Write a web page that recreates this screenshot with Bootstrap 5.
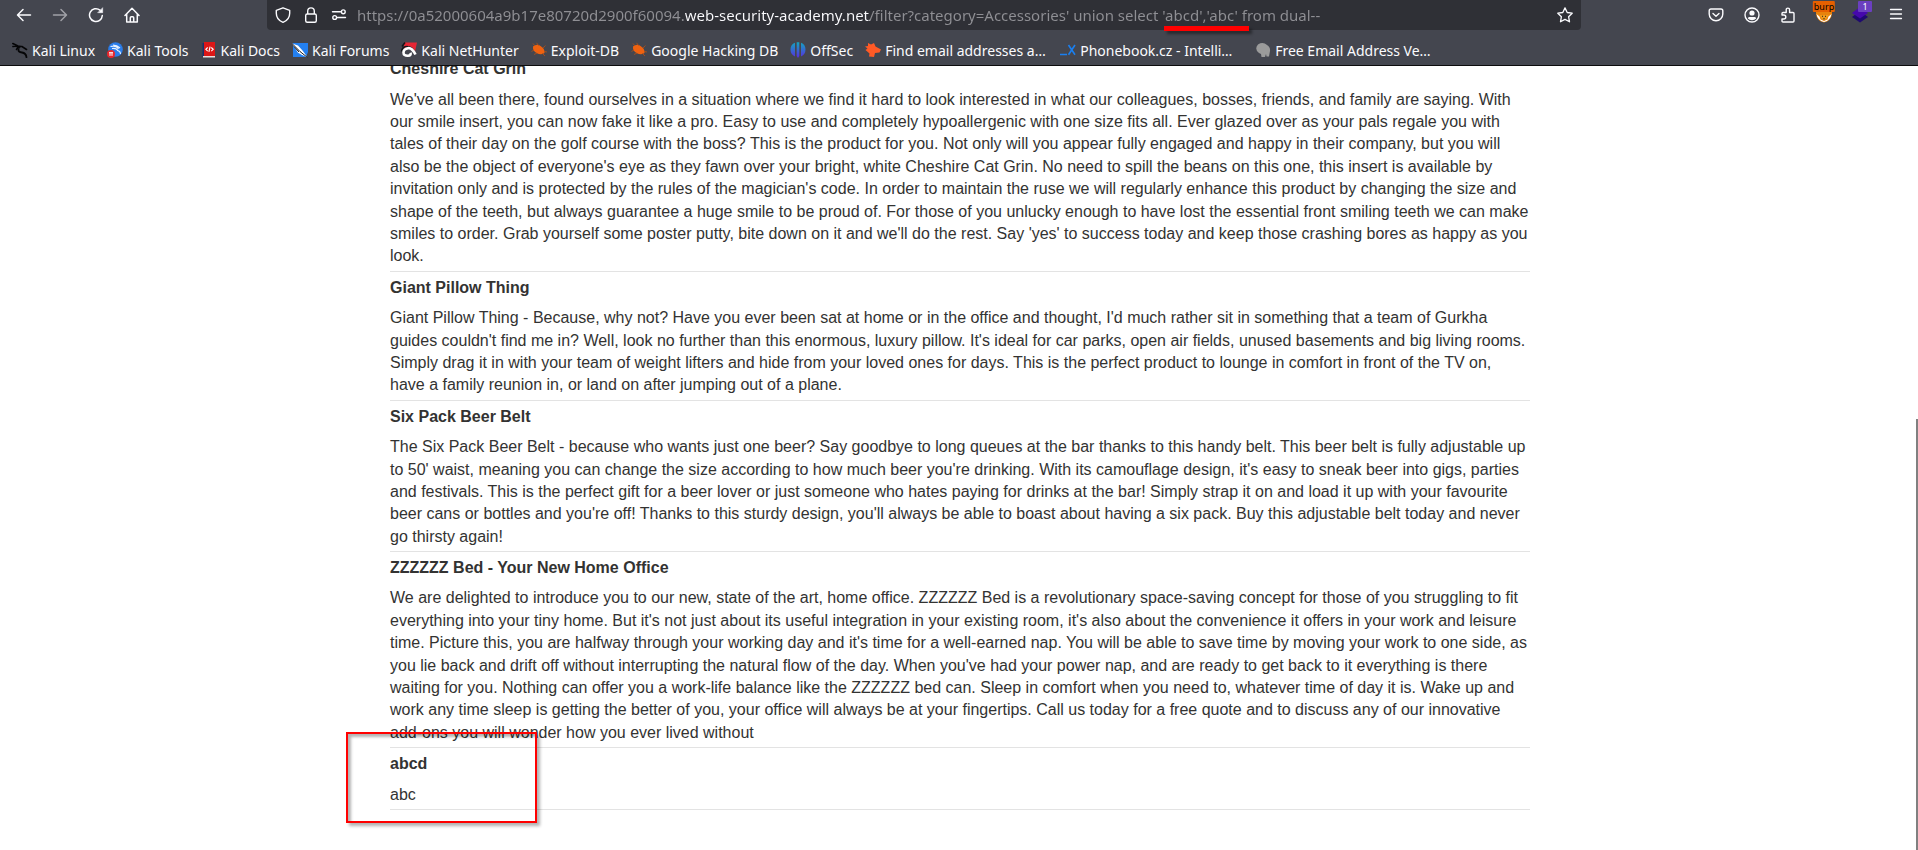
<!DOCTYPE html>
<html lang="en">
<head>
<meta charset="utf-8">
<meta name="viewport" content="width=device-width, initial-scale=1">
<title>Accessories</title>
<link href="https://cdn.jsdelivr.net/npm/bootstrap@5.3.0/dist/css/bootstrap.min.css" rel="stylesheet">
<style>
  body { font-family: "Liberation Sans", Arial, sans-serif; color: #333332; }
  .chrome { background: #44464f; border-bottom: 1px solid #0c0c0d; font-family: "Noto Sans", sans-serif; color: #fbfbfe; }
  .tool { width: 36px; height: 30px; color: #fbfbfe; }
  .tool-sm { width: 28px; height: 30px; color: #fbfbfe; }
  .toolbar-row { height: 30px; padding: 0 4px 0 6px; }
  .address { background: #2f3036; border-radius: 0 0 4px 4px; margin: 0 117px; padding: 0 2px; }
  .address input {
    height: 30px; padding: 0 4px; font-size: 15px;
    color: transparent; -webkit-text-fill-color: transparent;
    background: linear-gradient(90deg, #8f8f94 332px, #fbfbfe 332px, #fbfbfe 517px, #8f8f94 517px);
    -webkit-background-clip: text; background-clip: text;
  }
  .mark-bar { left: 897px; top: 26px; width: 85px; height: 5px; background: #f00; box-shadow: 3px 3px 3px rgba(0,0,0,.4); }
  .bookmarks { height: 35px; padding: 5px 12px 0; gap: 12px; font-size: 14px; }
  .bookmarks a { color: #fbfbfe; gap: 4px; }
  .fixed-label { width: 163px; }
  .ext-tag { top: 1px; left: 50%; height: 11px; padding: 0 1px; border-radius: 1px; font-size: 9px; line-height: 11px; }
  .ext-burp { background: #e66000; color: #000; transform: translateX(-50%); }
  .ext-count { background: #6b3fc0; color: #fff; width: 14px; margin-left: -2px; }
  .listing { max-width: 1140px; line-height: 1.4; padding-bottom: 40px; }
  .listing th, .listing td { padding: 5px 0 3px; }
  .listing td { border-bottom: 1px solid #e3e3e3; }
  .content { padding-left: 2px; }
  .mark-box { left: -44px; bottom: 27px; width: 191px; height: 91px; border: 2px solid #f00; box-shadow: 3px 3px 3px rgba(0,0,0,.3), inset 3px 3px 3px rgba(0,0,0,.3); }
  .scroll-thumb { width: 2px; top: 45%; background: #808080; }
</style>
</head>
<body class="vh-100 d-flex flex-column overflow-hidden bg-white">
<header class="chrome flex-shrink-0">
  <div class="toolbar-row d-flex">
    <button class="tool btn p-0 border-0 d-flex align-items-center justify-content-center" aria-label="Back"><svg width="16" height="16" fill="none" stroke="currentColor" stroke-width="1.5" stroke-linecap="round" stroke-linejoin="round"><path d="M14.5 8H1.8M7 2.5 1.5 8 7 13.5"/></svg></button>
    <button class="tool btn p-0 border-0 d-flex align-items-center justify-content-center opacity-50" aria-label="Forward"><svg width="16" height="16" fill="none" stroke="currentColor" stroke-width="1.5" stroke-linecap="round" stroke-linejoin="round"><path d="M1.5 8h12.700M9 2.5 14.5 8 9 13.5"/></svg></button>
    <button class="tool btn p-0 border-0 d-flex align-items-center justify-content-center" aria-label="Reload"><svg width="16" height="16" fill="none" stroke="currentColor" stroke-width="1.5" stroke-linecap="round"><path d="M14.3 8.500A6.400 6.400 0 1 1 12 3.200"/><path d="M14.700 1v4.700H10z" fill="currentColor" stroke-width=".5"/></svg></button>
    <button class="tool btn p-0 border-0 d-flex align-items-center justify-content-center" aria-label="Home"><svg width="16" height="16" fill="none" stroke="currentColor" stroke-width="1.5" stroke-linecap="round" stroke-linejoin="round"><path d="M1 8.500 8 1.300l7 7.200M2.700 7v8h10.600V7M6.300 15v-4.300q0-1 1-1h1.400q1 0 1 1V15"/></svg></button>
    <div class="address flex-fill d-flex position-relative">
      <button class="tool-sm btn p-0 border-0 d-flex align-items-center justify-content-center" aria-label="Tracking protection"><svg width="16" height="16" fill="none" stroke="currentColor" stroke-width="1.4" stroke-linejoin="round"><path d="M8 .8 14.700 3.300v2.900c0 4.400-2.600 7.500-6.700 9.100C3.900 13.700 1.300 10.600 1.300 6.200V3.300z"/></svg></button>
      <button class="tool-sm btn p-0 border-0 d-flex align-items-center justify-content-center" aria-label="Connection secure"><svg width="16" height="16" fill="none" stroke="currentColor" stroke-width="1.4"><rect x="2.700" y="7" width="10.600" height="8.200" rx="1.500"/><path d="M4.700 7V4.200a3.300 3.300 0 0 1 6.600 0V7"/></svg></button>
      <button class="tool-sm btn p-0 border-0 d-flex align-items-center justify-content-center" aria-label="Permissions"><svg width="16" height="16" fill="none" stroke="currentColor" stroke-width="1.4" stroke-linecap="round"><path d="M1.500 4.800h8M6.500 10.500h8"/><circle cx="12.300" cy="4.800" r="1.900"/><circle cx="3.700" cy="10.500" r="1.900"/></svg></button>
      <input type="text" class="flex-fill border-0 rounded-0" aria-label="Address" value="https://0a52000604a9b17e80720d2900f60094.web-security-academy.net/filter?category=Accessories' union select 'abcd','abc' from dual--">
      <button class="tool-sm btn p-0 border-0 d-flex align-items-center justify-content-center" aria-label="Bookmark this page"><svg width="16" height="16" fill="none" stroke="currentColor" stroke-width="1.3" stroke-linejoin="round"><path d="m8 .9 2.200 4.600 5 .7-3.600 3.500.9 5.100L8 12.400l-4.500 2.400.9-5.100L.8 6.200l5-.7z"/></svg></button>
      <span class="mark-bar position-absolute"></span>
    </div>
    <button class="tool btn p-0 border-0 d-flex align-items-center justify-content-center" aria-label="Pocket"><svg width="16" height="16" fill="none" stroke="currentColor" stroke-width="1.4" stroke-linecap="round" stroke-linejoin="round"><path d="M3 2h10q1.800 0 1.800 1.800V7A6.800 6.800 0 0 1 1.200 7V3.800Q1.200 2 3 2z"/><path d="M5 6.500 8 9.300l3-2.800"/></svg></button>
    <button class="tool btn p-0 border-0 d-flex align-items-center justify-content-center" aria-label="Account"><svg width="16" height="16" fill="none" stroke="currentColor" stroke-width="1.4"><circle cx="8" cy="8" r="7"/><circle cx="8" cy="6" r="2.600" fill="currentColor" stroke="none"/><path d="M3.800 11.500q0-1.500 1.500-1.500h5.400q1.500 0 1.500 1.500Q10.500 13.200 8 13.200T3.800 11.500z" fill="currentColor" stroke="none"/></svg></button>
    <button class="tool btn p-0 border-0 d-flex align-items-center justify-content-center" aria-label="Extensions"><svg width="16" height="16" fill="none" stroke="currentColor" stroke-width="1.4" stroke-linejoin="round"><path d="M2 8V6.500q0-1 1-1h3.200V2.800a1.700 1.700 0 0 1 3.400 0v2.700H13q1 0 1 1V14q0 1-1 1H3q-1 0-1-1v-2h1.800a2 2 0 0 0 0-4z"/></svg></button>
    <button class="tool btn p-0 border-0 d-flex align-items-center justify-content-center position-relative" aria-label="Proxy"><svg width="16" height="16"><path d="M0 2h16v5q-1 7-8 8.500Q1 14 0 7z" fill="#e8820c"/><path d="M.5 7q1 6.500 7.500 8 6.500-1.500 7.500-8l-3 2.500-1 3L8 14l-3.500-1.500-1-3z" fill="#fff"/><path d="M3.500 8h9l-2 3.500L8 13l-2.500-1.500z" fill="#f09a1c"/><path d="M6 9.300h1M9 9.300h1M7.300 11.800h1.400" stroke="#222"/></svg><span class="ext-tag ext-burp position-absolute">burp</span></button>
    <button class="tool btn p-0 border-0 d-flex align-items-center justify-content-center position-relative" aria-label="Technologies"><svg width="16" height="16"><path d="m8 4 8 6-8 5.500L0 10z" fill="#1f0a70"/><path d="m8 0 8 6-8 5.500L0 6z" fill="#4608ad"/></svg><span class="ext-tag ext-count position-absolute">1</span></button>
    <button class="tool btn p-0 border-0 d-flex align-items-center justify-content-center" aria-label="Menu"><svg width="16" height="16" stroke="currentColor" stroke-width="1.3" stroke-linecap="round"><path d="M2.500 2.500h11M2.500 7h11M2.500 11.500h11"/></svg></button>
  </div>
  <nav class="bookmarks d-flex align-items-center text-nowrap">
    <a href="#" class="d-flex align-items-center text-decoration-none"><svg width="16" height="16" fill="none" stroke="#050507" stroke-width="1.6" stroke-linecap="round"><path d="M.8 1.500 6 4l3 .5M1 4.500q4-1 6 1.500M4.500 7.500Q6 4 10 4.500l4.500 3"/><path d="M6.500 7.500Q6 10 10 10.500q4 .5 4.500 4.800" stroke-width="1.800"/></svg>Kali Linux</a>
    <a href="#" class="d-flex align-items-center text-decoration-none"><svg width="16" height="16"><circle cx="8.500" cy="7.500" r="7.300" fill="#2b7de9"/><path d="M3.500 4.500q6-1.500 8 2.500M5 6.500q5-.5 5.500 2 3 .5 3 3.500M6 3q4 0 7 3" fill="none" stroke="#e6f1ff" stroke-width="1.1"/><circle cx="4" cy="12" r="4" fill="#e8262c"/><path d="M2 10.700h4M3 10.700v3.200M5 10.700v3.200" stroke="#fff"/></svg>Kali Tools</a>
    <a href="#" class="d-flex align-items-center text-decoration-none"><svg width="16" height="16"><path d="M1.500 1h2.500v14H1.500z" fill="#1b2f6b"/><path d="M3 0h11v14H3z" fill="#dd1717"/><path d="M2 14h12v1.500H2z" fill="#eadede"/><path d="M6.700 5.500 4.800 7.300l1.900 1.800M10.300 5.500l1.900 1.800-1.900 1.800M9.100 4.700l-1.200 5.200" fill="none" stroke="#fff" stroke-width="1.1"/></svg>Kali Docs</a>
    <a href="#" class="d-flex align-items-center text-decoration-none"><svg width="16" height="16"><path d="M1 1h15v9l-2 5H1z" fill="#2480f0"/><path d="M0 1.500 6 3.500l4.500 5 1.500 2 3.500 5-5.500-2.500-4-2.200-3-4.800z" fill="#fff"/><path d="m0 1.500 8 8 7.500 6M2 4.500 7 10" stroke="#181c24" fill="none"/></svg>Kali Forums</a>
    <a href="#" class="d-flex align-items-center text-decoration-none"><svg width="16" height="16"><path d="M3 .5h13l-2 9-5-4-6 1z" fill="#e62635"/><path d="M4 .5 1 4.500M.5 9.500Q1 4.500 6 4.500t8 6" fill="none" stroke="#15161a" stroke-width="1.5"/><path d="M14.500 12.500Q11 5.500 7 6.200 2.500 7 2.500 10.500T7 13.800q3.500-.3 2.500-3" fill="none" stroke="#fff" stroke-width="2.600"/></svg>Kali NetHunter</a>
    <a href="#" class="d-flex align-items-center text-decoration-none"><svg width="16" height="16"><path d="M2 4.500q4-3 7.500-.5 4.500 2.500 4 7-3.500 2.500-7.500.3Q1.500 9 2 4.500z" fill="#ee6211"/><path d="M4 4 2 1.500M8 4 5.500.8M12 6l2.500-2.500M3 8 .5 9.500M6 11l-3 1.500M13 9.500l3 .5M11 11l3 3" stroke="#b85013" stroke-width=".8"/></svg>Exploit-DB</a>
    <a href="#" class="d-flex align-items-center text-decoration-none"><svg width="16" height="16"><path d="M2 4.500q4-3 7.500-.5 4.500 2.500 4 7-3.500 2.500-7.500.3Q1.500 9 2 4.500z" fill="#ee6211"/><path d="M4 4 2 1.500M8 4 5.500.8M12 6l2.500-2.500M3 8 .5 9.500M6 11l-3 1.500M13 9.500l3 .5M11 11l3 3" stroke="#b85013" stroke-width=".8"/></svg>Google Hacking DB</a>
    <a href="#" class="d-flex align-items-center text-decoration-none"><svg width="16" height="16"><defs><linearGradient id="offsec" x2="0" y2="1"><stop stop-color="#12a5c0"/><stop offset="1" stop-color="#5a2be0"/></linearGradient></defs><path d="M5 .8v13.600Q.5 12.500.5 7.500T5 .8zM11 .8v13.600q4.500-1.900 4.500-6.900T11 .8zM6.700.3h2.600V14L8 16l-1.300-2z" fill="url(#offsec)"/></svg>OffSec</a>
    <a href="#" class="d-flex align-items-center text-decoration-none"><svg width="16" height="16"><path d="m3 1 3 1.500L9 1l1.500 3.500 5.500 3-1.500 3-4.500.5-1 4-5-.5.500-3L.500 8l2-1.500L0 4.500l3-.5z" fill="#ff5a26"/></svg><span class="fixed-label">Find email addresses a…</span></a>
    <a href="#" class="d-flex align-items-center text-decoration-none"><svg width="16" height="16" fill="none" stroke="#1a7ff0" stroke-width="1.6"><path d="M0 12.500h7M8.500 3l6.500 9.800M15 3 8.500 12.800"/></svg><span class="fixed-label">Phonebook.cz - Intelli…</span></a>
    <a href="#" class="d-flex align-items-center text-decoration-none"><svg width="16" height="16"><path d="M3 2.500Q8-.5 12 3q3.500 2 3 6l-1 5.500h-2.500L11 12l-1 3H6.500L6 12l-2-1Q-1 7 3 2.500z" fill="#9b9b9b"/></svg><span class="fixed-label">Free Email Address Ve…</span></a>
  </nav>
</header>
<main class="content flex-fill overflow-hidden d-flex flex-column justify-content-end position-relative">
  <div class="listing w-100 mx-auto position-relative">
    <table class="w-100">
      <tbody>
        <tr><th>Cheshire Cat Grin</th></tr>
        <tr><td>We've all been there, found ourselves in a situation where we find it hard to look interested in what our colleagues, bosses, friends, and family are saying. With our smile insert, you can now fake it like a pro. Easy to use and completely hypoallergenic with one size fits all. Ever glazed over as your pals regale you with tales of their day on the golf course with the boss? This is the product for you. Not only will you appear fully engaged and happy in their company, but you will also be the object of everyone's eye as they fawn over your bright, white Cheshire Cat Grin. No need to spill the beans on this one, this insert is available by invitation only and is protected by the rules of the magician's code. In order to maintain the ruse we will regularly enhance this product by changing the size and shape of the teeth, but always guarantee a huge smile to be proud of. For those of you unlucky enough to have lost the essential front smiling teeth we can make smiles to order. Grab yourself some poster putty, bite down on it and we'll do the rest. Say 'yes' to success today and keep those crashing bores as happy as you look.</td></tr>
        <tr><th>Giant Pillow Thing</th></tr>
        <tr><td>Giant Pillow Thing - Because, why not? Have you ever been sat at home or in the office and thought, I'd much rather sit in something that a team of Gurkha guides couldn't find me in? Well, look no further than this enormous, luxury pillow. It's ideal for car parks, open air fields, unused basements and big living rooms. Simply drag it in with your team of weight lifters and hide from your loved ones for days. This is the perfect product to lounge in comfort in front of the TV on, have a family reunion in, or land on after jumping out of a plane.</td></tr>
        <tr><th>Six Pack Beer Belt</th></tr>
        <tr><td>The Six Pack Beer Belt - because who wants just one beer? Say goodbye to long queues at the bar thanks to this handy belt. This beer belt is fully adjustable up to 50' waist, meaning you can change the size according to how much beer you're drinking. With its camouflage design, it's easy to sneak beer into gigs, parties and festivals. This is the perfect gift for a beer lover or just someone who hates paying for drinks at the bar! Simply strap it on and load it up with your favourite beer cans or bottles and you're off! Thanks to this sturdy design, you'll always be able to boast about having a six pack. Buy this adjustable belt today and never go thirsty again!</td></tr>
        <tr><th>ZZZZZZ Bed - Your New Home Office</th></tr>
        <tr><td>We are delighted to introduce you to our new, state of the art, home office. ZZZZZZ Bed is a revolutionary space-saving concept for those of you struggling to fit everything into your tiny home. But it's not just about its useful integration in your existing room, it's also about the convenience it offers in your work and leisure time. Picture this, you are halfway through your working day and it's time for a well-earned nap. You will be able to save time by moving your work to one side, as you lie back and drift off without interrupting the natural flow of the day. When you've had your power nap, and are ready to get back to it everything is there waiting for you. Nothing can offer you a work-life balance like the ZZZZZZ bed can. Sleep in comfort when you need to, whatever time of day it is. Wake up and work any time sleep is getting the better of you, your office will always be at your fingertips. Call us today for a free quote and to discuss any of our innovative add-ons you will wonder how you ever lived without</td></tr>
        <tr><th>abcd</th></tr>
        <tr><td>abc</td></tr>
      </tbody>
    </table>
    <div class="mark-box position-absolute"></div>
  </div>
  <div class="scroll-thumb position-absolute end-0 bottom-0"></div>
</main>
<script src="https://cdn.jsdelivr.net/npm/bootstrap@5.3.0/dist/js/bootstrap.bundle.min.js"></script>
</body>
</html>
